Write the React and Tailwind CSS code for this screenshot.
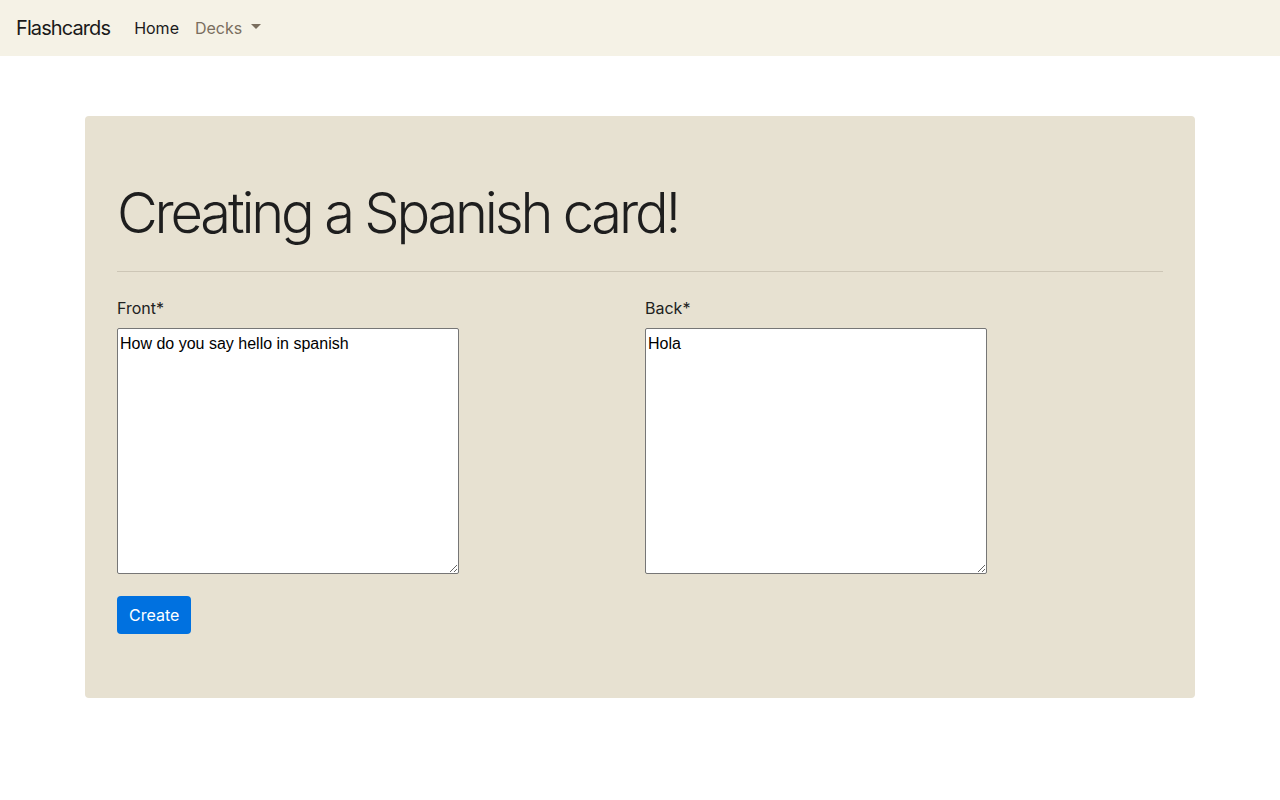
import React, { useState } from 'react';

function Navbar() {
  return (
    <nav className="h-14 bg-[#f5f2e6] flex items-center px-4">
      <a className="text-[20px] text-[#1a1a1a] mr-4 leading-[30px] tracking-[-0.9px]">Flashcards</a>
      <a className="text-base text-[#1a1a1a] px-2 leading-6">Home</a>
      <a className="text-base text-[#7a6e5e] px-2 leading-6 flex items-center">
        Decks
        <span className="ml-[9px] inline-block w-0 h-0 border-l-[5px] border-r-[5px] border-t-[5px] border-l-transparent border-r-transparent border-t-[#7a6e5e] -translate-y-[2px]" />
      </a>
    </nav>
  );
}

function Field({ label, value, onChange }) {
  return (
    <div className="w-[342px]">
      <label className="block text-base leading-6 mb-2 text-[#212121]">{label}</label>
      <textarea
        value={value}
        onChange={(e) => onChange(e.target.value)}
        className="block w-[342px] h-[246px] bg-white border border-[#767676] rounded-[2px] px-[2px] pt-[5px] pb-[2px] text-[16px] leading-[19px] text-black font-['Liberation_Sans',Arial,sans-serif] outline-none"
      />
    </div>
  );
}

export default function App() {
  const [front, setFront] = useState('How do you say hello in spanish');
  const [back, setBack] = useState('Hola');

  return (
    <div className="min-h-[800px] bg-white font-['Inter',sans-serif] text-[#212121]">
      <Navbar />
      <main className="w-[1110px] mx-auto pt-[60px]">
        <div className="bg-[#e7e1d1] rounded-[4px] px-8 py-16">
          <h1 className="text-[56px] font-light leading-[67px] tracking-[-3.2px] text-[#1e1e1e]">
            Creating a Spanish card!
          </h1>
          <hr className="my-6 border-0 border-t border-[#cdc6b6]" />
          <div className="flex gap-[186px]">
            <Field label="Front*" value={front} onChange={setFront} />
            <Field label="Back*" value={back} onChange={setBack} />
          </div>
          <button className="mt-[22px] h-[38px] px-3 rounded-[4px] bg-[#0071e0] text-white text-base leading-6">
            Create
          </button>
        </div>
      </main>
    </div>
  );
}
